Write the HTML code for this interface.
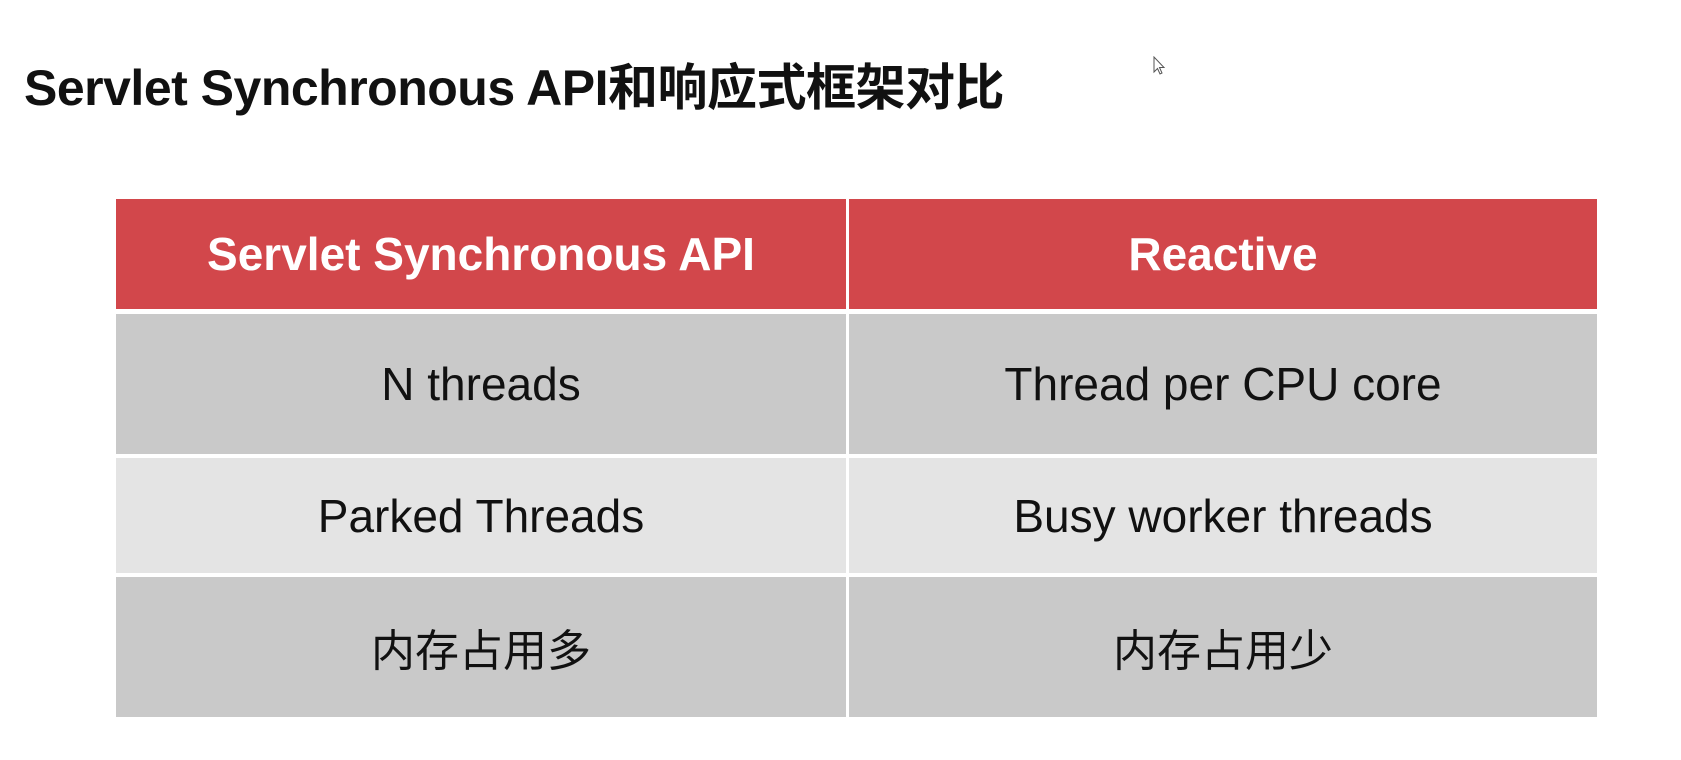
<!DOCTYPE html>
<html><head><meta charset="utf-8"><style>
body{margin:0;width:1681px;height:760px;background:#fff;overflow:hidden;position:relative;font-family:"Liberation Sans","Noto Sans CJK SC",sans-serif}
.t{position:absolute;left:24px;top:58px;font-size:50px;line-height:60px;font-weight:bold;color:#111;white-space:nowrap;letter-spacing:-0.5px}
.c{position:absolute;display:flex;align-items:center;justify-content:center;font-size:46px;color:#111;white-space:nowrap}
.h{background:#d2474b;color:#fff;font-weight:bold}
.g{background:#c9c9c9}.l{background:#e4e4e4}
.z{font-size:44px}
</style></head><body>
<div class="t">Servlet Synchronous API和响应式框架对比</div>
<svg style="position:absolute;left:1153px;top:56px" width="14" height="20" viewBox="0 0 14 20"><path d="M1 1 L1 16 L4.5 12.5 L7 18 L9 17 L6.5 11.5 L11 11.5 Z" fill="#fff" stroke="#555" stroke-width="1"/></svg>
<div class="c h" style="left:116px;top:199px;width:730px;height:110px">Servlet Synchronous API</div>
<div class="c h" style="left:849px;top:199px;width:748px;height:110px">Reactive</div>
<div class="c g" style="left:116px;top:314px;width:730px;height:140px">N threads</div>
<div class="c g" style="left:849px;top:314px;width:748px;height:140px">Thread per CPU core</div>
<div class="c l" style="left:116px;top:458px;width:730px;height:115px">Parked Threads</div>
<div class="c l" style="left:849px;top:458px;width:748px;height:115px">Busy worker threads</div>
<div class="c g z" style="left:116px;top:577px;width:730px;height:140px">内存占用多</div>
<div class="c g z" style="left:849px;top:577px;width:748px;height:140px">内存占用少</div>
</body></html>
